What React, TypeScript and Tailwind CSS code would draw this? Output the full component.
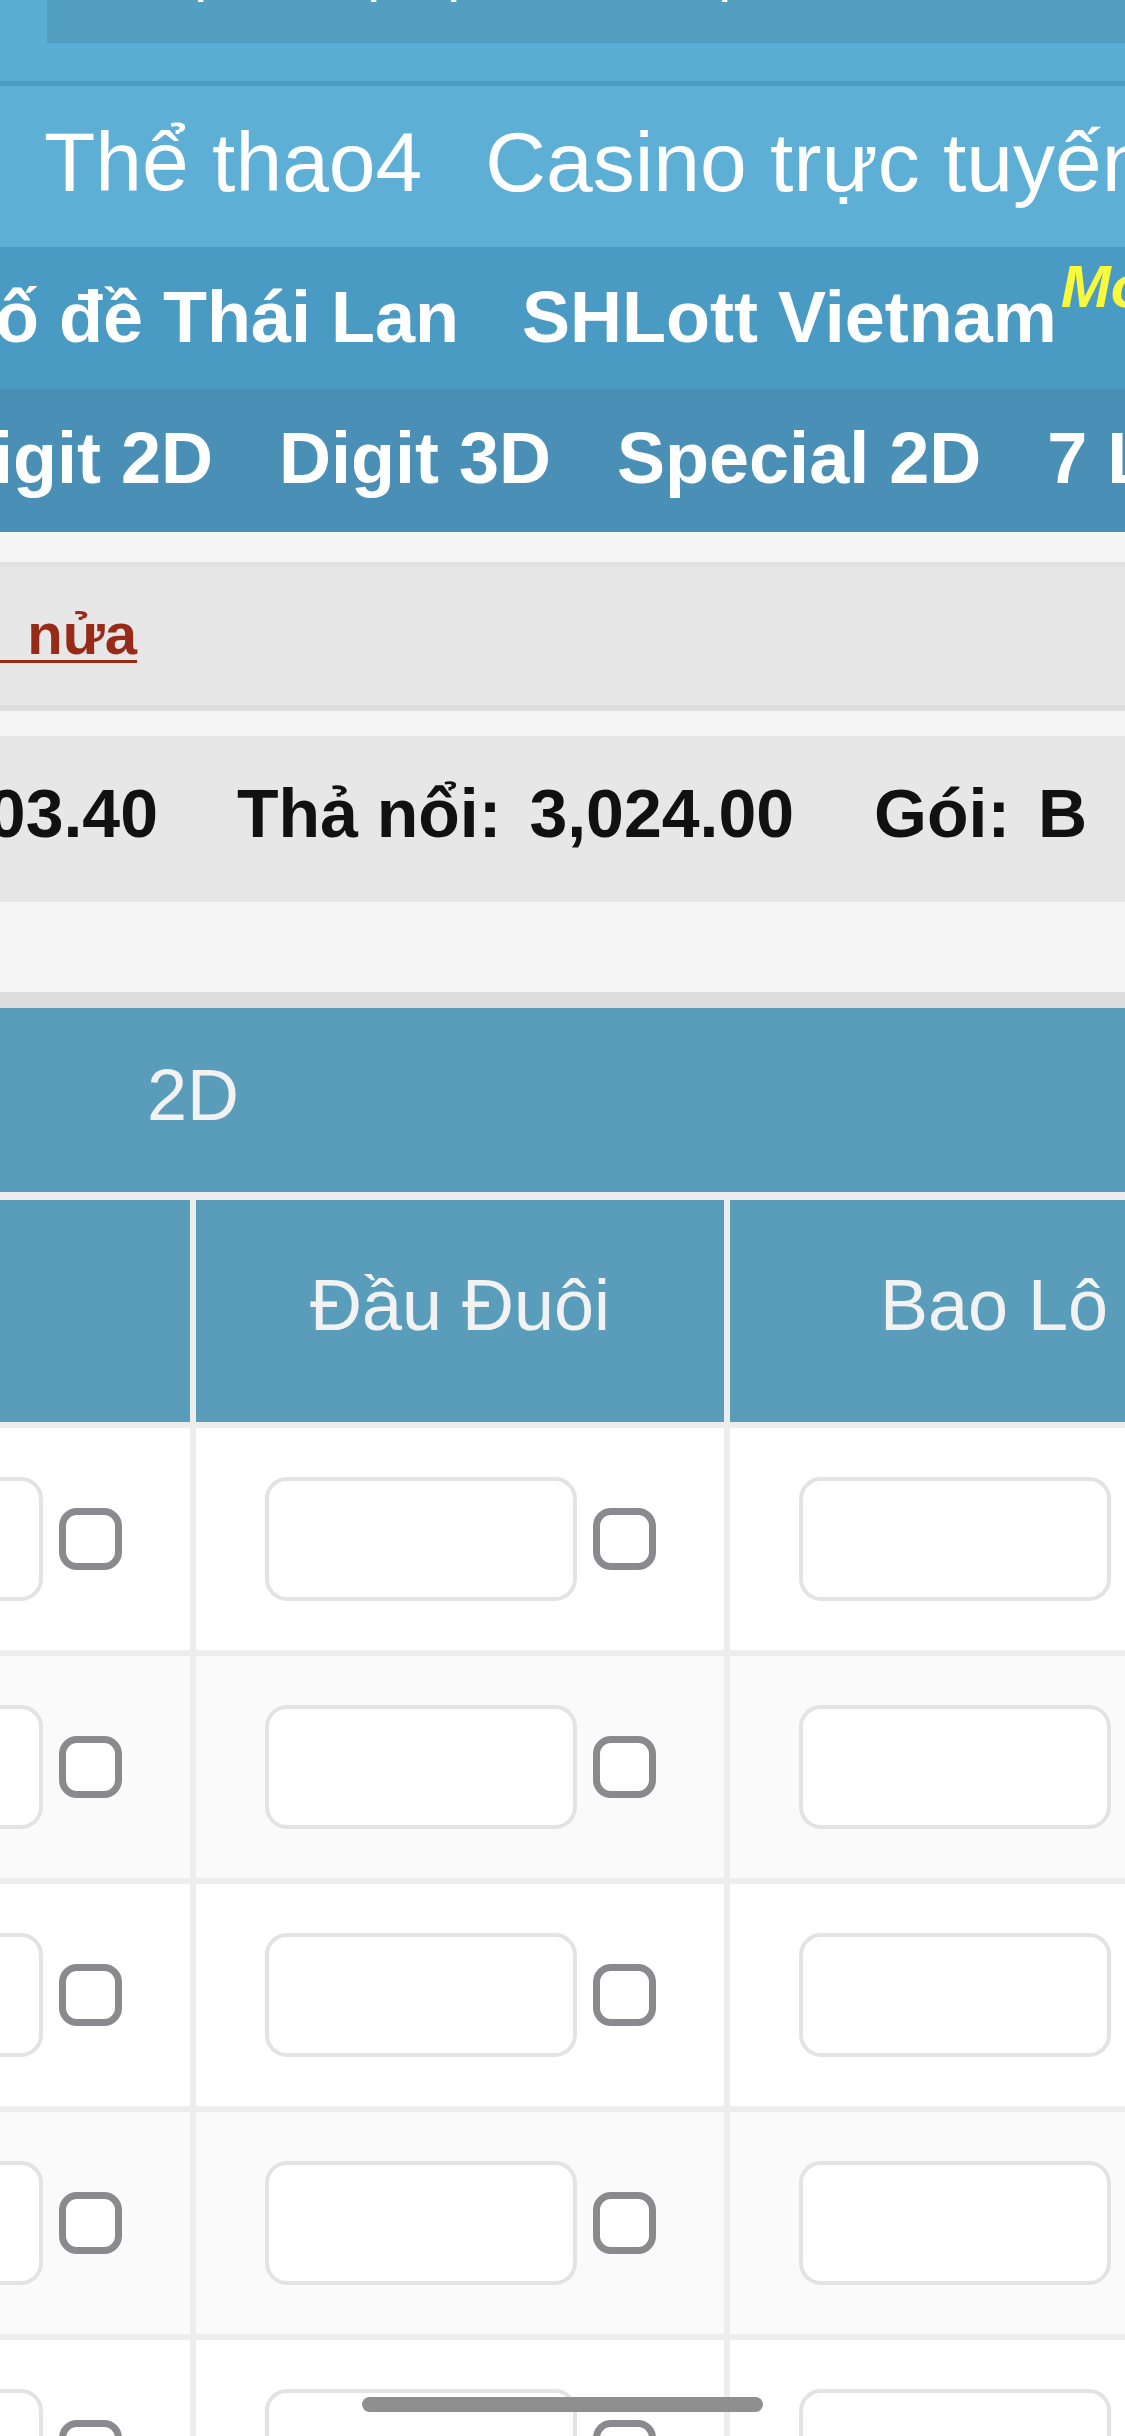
import React from "react";

const rows = [0, 1, 2, 3, 4];
const cols = ["Số", "Đầu Đuôi", "Bao Lô"];

function Cell() {
  return (
    <div className="w-[534px] shrink-0 h-full flex items-center justify-center gap-[16px] border-r-[6px] border-[#EDEDED]">
      <input
        type="text"
        readOnly
        className="w-[312px] h-[124px] shrink-0 border-[4px] border-[#E3E3E3] rounded-[22px] bg-white outline-none"
      />
      <input
        type="checkbox"
        className="appearance-none w-[63px] h-[62px] shrink-0 border-[7px] border-[#8A8A8E] rounded-[18px] bg-white"
      />
    </div>
  );
}

export default function App() {
  return (
    <div className="relative w-[1125px] h-[2436px] overflow-hidden bg-[#F5F5F5] font-['Liberation_Sans',Arial,sans-serif]">
      {/* top bar */}
      <div className="h-[81px] bg-[#5AAED5] pl-[47px]">
        <div className="h-[43px] bg-[#529FC1] overflow-hidden">
          <div className="flex whitespace-nowrap leading-none text-[60px] text-white mt-[-60px]">
            <span className="w-[147px] shrink-0" />
            <span className="w-[173px] shrink-0">phí</span>
            <span className="w-[80px] shrink-0">phải</span>
            <span className="w-[271px] shrink-0">phần</span>
            <span className="shrink-0">phố</span>
          </div>
        </div>
      </div>
      <div className="h-[5px] bg-[#4B9AC1]" />

      {/* nav row 1 */}
      <div className="h-[161px] bg-[#5DAFD6] overflow-hidden">
        <div className="flex gap-[63px] pl-[44px] pt-[34px] text-[84px] leading-none text-white whitespace-nowrap">
          <span className="shrink-0">Thể thao4</span>
          <span className="shrink-0">Casino trực tuyến</span>
          <span className="shrink-0">Trò chơi</span>
        </div>
      </div>

      {/* nav row 2 */}
      <div className="h-[142px] bg-[#4A9BC4] overflow-hidden">
        <div className="flex gap-[63px] ml-[-53px] pt-[34px] text-[72px] font-bold leading-none text-white whitespace-nowrap">
          <span className="shrink-0">Số đề Thái Lan</span>
          <span className="shrink-0">
            SHLott Vietnam
            <span className="ml-[4px] text-[60px] italic text-[#F9F93C] leading-[0] align-[35px]">Mới</span>
          </span>
        </div>
      </div>

      {/* nav row 3 */}
      <div className="h-[143px] bg-[#4A8FB5] overflow-hidden">
        <div className="flex gap-[66px] ml-[-59px] pt-[33px] text-[72px] font-bold leading-none text-white whitespace-nowrap">
          <span className="shrink-0">Digit 2D</span>
          <span className="shrink-0">Digit 3D</span>
          <span className="shrink-0">Special 2D</span>
          <span className="shrink-0">7 Lô</span>
        </div>
      </div>

      <div className="h-[30px]" />
      <div className="h-[5px] bg-[#E0E0E0]" />

      {/* notice band */}
      <div className="h-[138px] bg-[#E7E7E7] pt-[38px] overflow-hidden">
        <div className="w-[137px] flex justify-end">
          <a className="shrink-0 whitespace-pre text-[58px] leading-none font-bold text-[#982A18] underline decoration-[3px] underline-offset-[6px]">
            {"Xem thêm một   nửa"}
          </a>
        </div>
      </div>
      <div className="h-[6px] bg-[#DEDEDE]" />
      <div className="h-[25px]" />

      {/* stats band */}
      <div className="h-[166px] bg-[#E7E7E7] pt-[43px] overflow-hidden">
        <div className="flex text-[68px] leading-none font-bold text-[#111111] whitespace-nowrap">
          <div className="w-[158px] shrink-0 flex justify-end">
            <div className="flex shrink-0">
              <span>Tín dụng:</span>
              <span className="ml-[28px]">1,203.40</span>
            </div>
          </div>
          <div className="flex shrink-0 ml-[79px]">
            <span>Thả nổi:</span>
            <span className="ml-[28px]">3,024.00</span>
          </div>
          <div className="flex shrink-0 ml-[80px]">
            <span>Gói:</span>
            <span className="ml-[28px]">B</span>
          </div>
        </div>
      </div>

      <div className="h-[90px]" />
      <div className="h-[16px] bg-[#DCDCDC]" />

      {/* 2D header */}
      <div className="h-[184px] bg-[#599DBB] pl-[147px] pt-[51px] text-[72px] leading-none text-[#F2F2F2]">
        2D
      </div>
      <div className="h-[8px] bg-[#EDEDED]" />

      {/* column headers */}
      <div className="h-[228px] border-b-[6px] border-[#EDEDED] overflow-hidden">
        <div className="flex h-full ml-[-338px]">
          {cols.map((c) => (
            <div
              key={c}
              className="w-[534px] shrink-0 h-full bg-[#599DBB] flex justify-center pt-[69px] text-[72px] leading-none text-[#F2F2F2] whitespace-nowrap border-r-[6px] border-[#EDEDED]"
            >
              {c}
            </div>
          ))}
        </div>
      </div>

      {/* data rows */}
      {rows.map((r) => (
        <div
          key={r}
          className={
            "h-[228px] border-b-[6px] border-[#EDEDED] overflow-hidden " +
            (r % 2 === 0 ? "bg-white" : "bg-[#FAFAFA]")
          }
        >
          <div className="flex h-full ml-[-338px]">
            <Cell />
            <Cell />
            <Cell />
          </div>
        </div>
      ))}

      {/* home indicator */}
      <div className="absolute left-[362px] top-[2397px] w-[401px] h-[15px] rounded-full bg-[#8F8F8F]" />
    </div>
  );
}
